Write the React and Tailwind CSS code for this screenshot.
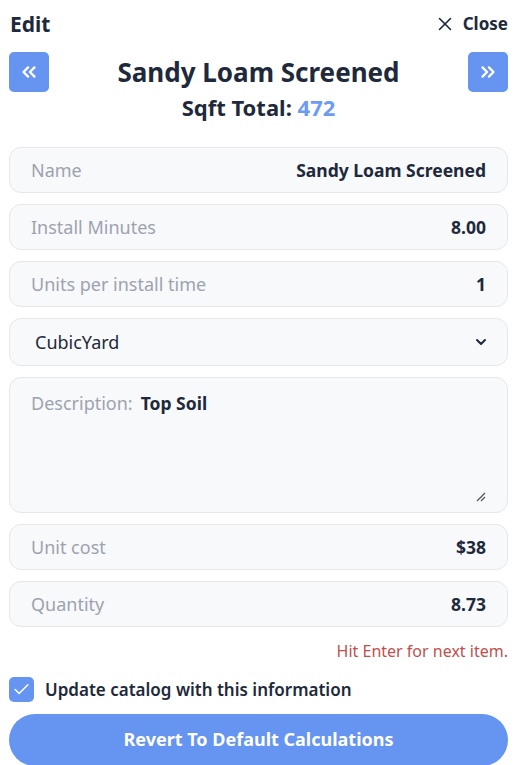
import { X, ChevronsLeft, ChevronsRight, ChevronDown, Check } from "lucide-react";

const Field = ({ label, value }) => (
  <div className="h-[46px] rounded-xl border border-[#e5e7eb] bg-[#f8f9fb] px-[21px] flex items-center justify-between">
    <span className="text-[18px] text-[#9ca3af]">{label}</span>
    <span className="text-[17.5px] font-bold text-[#1e293b]">{value}</span>
  </div>
);

export default function App() {
  return (
    <div
      className="w-[525px] h-[765px] bg-white overflow-hidden pl-[9px] pr-[17px] text-[#1e293b]"
      style={{ fontFamily: '"Noto Sans", sans-serif' }}
    >
      {/* Header */}
      <div className="flex items-center justify-between pt-[10px] pl-[1px]">
        <span className="text-[21px] font-bold leading-[28px]">Edit</span>
        <button className="flex items-center gap-[7px] text-[17px] font-bold">
          <X size={22} strokeWidth={1.75} />
          Close
        </button>
      </div>

      <div className="flex items-start justify-between mt-[14px]">
        <button className="w-[40px] h-[40px] rounded-[5px] bg-[#6594f1] flex items-center justify-center">
          <ChevronsLeft size={22} color="white" strokeWidth={2.5} />
        </button>
        <div className="flex flex-col items-center">
          <h1 className="text-[26px] font-bold leading-[40px]">Sandy Loam Screened</h1>
          <p className="text-[22px] font-bold leading-[28px] mt-[1px]">
            Sqft Total: <span className="text-[#6b9bf3]">472</span>
          </p>
        </div>
        <button className="w-[40px] h-[40px] rounded-[5px] bg-[#6594f1] flex items-center justify-center">
          <ChevronsRight size={22} color="white" strokeWidth={2.5} />
        </button>
      </div>

      {/* Fields */}
      <div className="flex flex-col gap-[11px] mt-[26px]">
        <Field label="Name" value="Sandy Loam Screened" />
        <Field label="Install Minutes" value="8.00" />
        <Field label="Units per install time" value="1" />
        <div className="h-[48px] rounded-xl border border-[#e5e7eb] bg-[#f8f9fb] pl-[25px] pr-[18px] flex items-center justify-between">
          <span className="text-[18px] text-[#1e293b]">CubicYard</span>
          <ChevronDown size={16} strokeWidth={3} />
        </div>
        <div className="relative h-[136px] rounded-xl border border-[#e5e7eb] bg-[#f8f9fb] px-[21px] pt-[12px]">
          <span className="text-[18px] text-[#9ca3af]">Description:</span>
          <span className="text-[17.5px] font-bold ml-[8px]">Top Soil</span>
          <svg className="absolute right-[21px] bottom-[10px]" width="10" height="10" viewBox="0 0 10 10">
            <path d="M9 1 L1 9 M9 5 L5 9" stroke="#555" strokeWidth="1.2" />
          </svg>
        </div>
        <Field label="Unit cost" value="$38" />
        <Field label="Quantity" value="8.73" />
      </div>

      <p className="text-right text-[16px] text-[#c0504d] mt-[12px]">Hit Enter for next item.</p>

      <label className="flex items-center gap-[11px] mt-[14px]">
        <span className="w-[25px] h-[25px] rounded-[5px] bg-[#6594f1] flex items-center justify-center">
          <Check size={19} color="white" strokeWidth={2} />
        </span>
        <span className="text-[17px] font-semibold">Update catalog with this information</span>
      </label>

      <button className="mt-[11px] w-full h-[52px] rounded-full bg-[#6594f1] text-white text-[18px] font-bold">
        Revert To Default Calculations
      </button>
    </div>
  );
}
